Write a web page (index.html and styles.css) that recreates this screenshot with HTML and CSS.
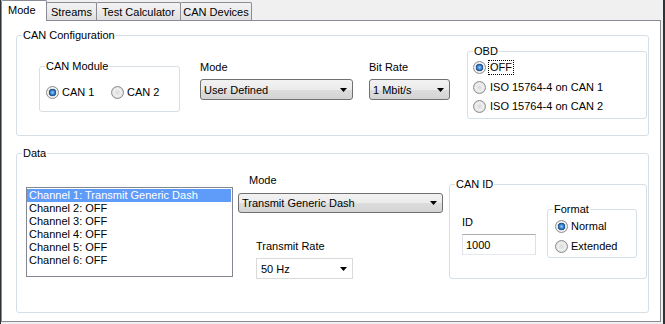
FILE: index.html
```html
<!DOCTYPE html>
<html lang="en">
    <head>
        <meta charset="UTF-8" />
        <title>CAN Settings</title>
        <link rel="stylesheet" href="styles.css">
    </head>
    <body>
        <div class="window">
            <div class="tabs">
                <div class="tab active">Mode</div>
                <div class="tab streams">Streams</div>
                <div class="tab calculator">Test Calculator</div>
                <div class="tab devices">CAN Devices</div>
            </div>

            <div class="panel">
                <fieldset class="group config">
                    <legend>CAN Configuration</legend>

                    <fieldset class="group module">
                        <legend>CAN Module</legend>
                        <div class="radio-line">
                            <label class="radio can-radio"><input type="radio" name="module" checked /><span>CAN 1</span></label>
                            <label class="radio can-radio"><input type="radio" name="module" /><span>CAN 2</span></label>
                        </div>
                    </fieldset>

                    <div class="field config-mode">
                        <div class="caption">Mode</div>
                        <div class="combo">
                            <span>User Defined</span>
                            <svg width="7" height="4" viewBox="0 0 7 4"><path d="M0 0h7L3.5 4z" /></svg>
                        </div>
                    </div>

                    <div class="field bit-rate">
                        <div class="caption">Bit Rate</div>
                        <div class="combo">
                            <span>1 Mbit/s</span>
                            <svg width="7" height="4" viewBox="0 0 7 4"><path d="M0 0h7L3.5 4z" /></svg>
                        </div>
                    </div>

                    <fieldset class="group obd">
                        <legend>OBD</legend>
                        <div class="options">
                            <label class="radio"><input type="radio" name="obd" checked /><span class="focus">OFF</span></label>
                            <label class="radio"><input type="radio" name="obd" /><span>ISO 15764-4 on CAN 1</span></label>
                            <label class="radio"><input type="radio" name="obd" /><span>ISO 15764-4 on CAN 2</span></label>
                        </div>
                    </fieldset>
                </fieldset>

                <fieldset class="group data">
                    <legend>Data</legend>

                    <div class="listbox">
                        <div class="item selected">Channel 1: Transmit Generic Dash</div>
                        <div class="item">Channel 2: OFF</div>
                        <div class="item">Channel 3: OFF</div>
                        <div class="item">Channel 4: OFF</div>
                        <div class="item">Channel 5: OFF</div>
                        <div class="item">Channel 6: OFF</div>
                    </div>

                    <div class="channel-settings">
                        <div class="caption mode-caption">Mode</div>
                        <div class="combo channel-mode">
                            <span>Transmit Generic Dash</span>
                            <svg width="7" height="4" viewBox="0 0 7 4"><path d="M0 0h7L3.5 4z" /></svg>
                        </div>

                        <div class="field transmit-rate">
                            <div class="caption">Transmit Rate</div>
                            <div class="combo flat">
                                <span>50 Hz</span>
                                <svg width="7" height="4" viewBox="0 0 7 4"><path d="M0 0h7L3.5 4z" /></svg>
                            </div>
                        </div>
                    </div>

                    <fieldset class="group can-id">
                        <legend>CAN ID</legend>

                        <div class="field id-field">
                            <div class="caption">ID</div>
                            <input class="textbox" type="text" value="1000" />
                        </div>

                        <fieldset class="group format">
                            <legend>Format</legend>
                            <div class="options">
                                <label class="radio"><input type="radio" name="format" checked /><span>Normal</span></label>
                                <label class="radio"><input type="radio" name="format" /><span>Extended</span></label>
                            </div>
                        </fieldset>
                    </fieldset>
                </fieldset>
            </div>
        </div>
    </body>
</html>
```

FILE: styles.css
```css
* {
    box-sizing: border-box;
}

body {
    margin: 0;
    background-color: #f0f0f0;
    font-family: "Liberation Sans", Arial, sans-serif;
    font-size: 11px;
    color: #000;
}

.window {
    width: 665px;
    height: 324px;
    display: flex;
    flex-direction: column;
    border-left: 1px solid #2e3338;
    border-right: 2px solid #2e3338;
}

/* tab strip */
.tabs {
    display: flex;
    align-items: flex-end;
    height: 20px;
}

.tab {
    height: 18px;
    padding-top: 3px;
    margin-left: -1px;
    border: 1px solid #898c95;
    border-bottom: none;
    border-radius: 2px 2px 0 0;
    background: linear-gradient(#f3f3f3, #ebebeb 50%, #dedede);
    text-align: center;
    white-space: nowrap;
}

.tab.active {
    position: relative;
    z-index: 1;
    width: 46px;
    height: 21px;
    margin-left: 0;
    margin-bottom: -1px;
    padding: 3px 0 0 6px;
    text-align: left;
    background: #fff;
}

.tab.streams {
    width: 51px;
}

.tab.calculator {
    width: 85px;
}

.tab.devices {
    width: 72px;
}

.panel {
    flex: 1;
    margin: 0 2px 2px 0;
    background-color: #fff;
    border: 1px solid #898c95;
}

/* group boxes */
.group {
    margin: 0;
    padding: 0;
    min-width: 0;
    border: 1px solid #d5dfe5;
    border-radius: 3px;
}

.group legend {
    margin-left: 5px;
    padding: 0 1px;
    line-height: 12px;
}

.config {
    width: 633px;
    height: 107px;
    margin: 8px 0 0 14px;
    display: flex;
    align-items: flex-start;
}

.data {
    width: 633px;
    height: 166px;
    margin: 11px 0 0 14px;
    display: flex;
    align-items: flex-start;
}

.module {
    width: 141px;
    height: 52px;
    margin: 19px 0 0 22px;
}

.radio-line {
    display: flex;
    padding: 14px 0 0 6px;
}

.radio {
    display: flex;
    align-items: center;
    height: 13px;
    gap: 2px;
    white-space: nowrap;
}

.radio span {
    padding: 0 1px;
    line-height: 13px;
}

.radio .focus {
    outline: 1px dotted #000;
}

.can-radio {
    width: 65px;
}

.radio input {
    appearance: none;
    flex: none;
    width: 13px;
    height: 13px;
    margin: 0;
    border: 1px solid #8c8e91;
    border-radius: 50%;
    background: radial-gradient(circle, #d9d9d9 0, #f0f0f0 4px, #d2d2d2 6px);
}

.radio input:checked {
    background: radial-gradient(circle, #8fd3ff 0, #3c86d0 2px, #1b4a86 3.5px, #e2e2e2 4px, #f4f4f4 5px, #cfcfcf 6px);
}

.obd {
    width: 180px;
    height: 74px;
    margin: 4px 0 0 17px;
}

.obd .options {
    padding: 4px 0 0 5px;
}

.obd .radio,
.format .radio {
    height: 19.5px;
    align-items: flex-start;
}

.obd .radio {
    gap: 3px;
}

/* captions and combo boxes */
.caption {
    line-height: 13px;
    white-space: nowrap;
}

.field .combo,
.field .textbox {
    margin-top: 5px;
}

.config-mode {
    width: 153px;
    margin: 20px 0 0 20px;
}

.bit-rate {
    width: 81px;
    margin: 20px 0 0 16px;
}

.combo {
    display: flex;
    align-items: center;
    justify-content: space-between;
    height: 21px;
    padding: 0 5px 0 3px;
    border: 1px solid #707070;
    border-radius: 3px;
    background: linear-gradient(#f2f2f2, #ebebeb 50%, #dddddd 50%, #d4d4d4);
    white-space: nowrap;
}

.combo svg {
    flex: none;
}

.combo.flat {
    padding-left: 4px;
    border-color: #dadada;
    border-radius: 0;
    background: #fff;
}

/* data section */
.listbox {
    width: 207px;
    height: 90px;
    margin: 28px 0 0 9px;
    padding: 1px 0;
    border: 1px solid #828790;
}

.item {
    height: 13px;
    line-height: 13px;
    padding-left: 2px;
    margin-right: 1px;
    white-space: nowrap;
}

.item.selected {
    background-color: #5f9cfa;
    color: #fff;
}

.channel-settings {
    width: 205px;
    margin: 15px 0 0 5px;
}

.mode-caption {
    padding-left: 11px;
}

.channel-mode {
    height: 20px;
    margin-top: 6px;
}

.transmit-rate {
    width: 97px;
    margin: 27px 0 0 18px;
}

.can-id {
    width: 198px;
    height: 101px;
    margin: 19px 0 0 6px;
    display: flex;
    align-items: flex-start;
}

.id-field {
    width: 74px;
    margin: 26px 0 0 12px;
}

.textbox {
    display: block;
    width: 74px;
    height: 21px;
    padding: 0 3px;
    border: 1px solid;
    border-color: #abadb3 #dbdfe6 #e3e9ef #e2e3ea;
    font: inherit;
    color: #000;
}

.format {
    width: 90px;
    height: 55px;
    margin: 13px 0 0 11px;
}

.format .options {
    padding: 5px 0 0 7px;
}
```
